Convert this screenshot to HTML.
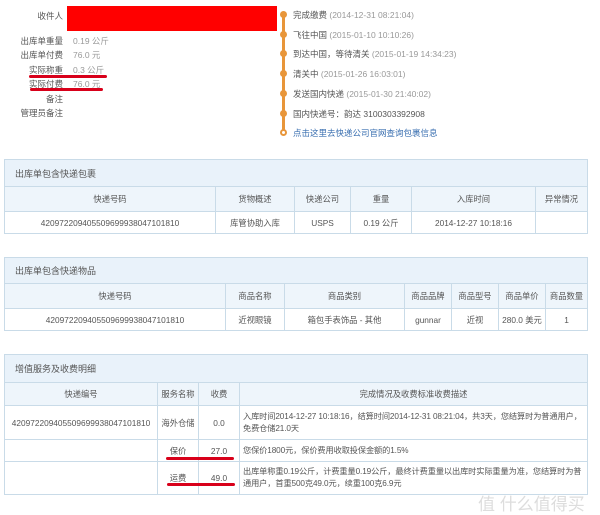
<!DOCTYPE html><html><head><meta charset="utf-8"><style>
*{margin:0;padding:0;box-sizing:border-box}
body{width:600px;height:511px;background:#fff;font-family:"Liberation Sans","Noto Sans CJK SC",sans-serif;font-size:8.5px;color:#555;position:relative;overflow:hidden}
.a{position:absolute;white-space:nowrap}
.lb{position:absolute;right:537px;text-align:right;color:#555}
.v{position:absolute;left:73px;color:#999}
.dot{position:absolute;left:280px;width:7px;height:7px;border-radius:50%;background:#e8963a}
.tl{position:absolute;left:293px;color:#555}
.tl span{color:#999}
table{position:absolute;left:4px;width:584px;border-collapse:collapse;table-layout:fixed}
td{border:1px solid #c9dbe8;text-align:center;color:#555;font-size:8.3px;padding:0 1px;white-space:nowrap;overflow:hidden}
td.w{white-space:normal;text-align:left;line-height:12px;padding:0 3px;font-size:8.2px;letter-spacing:-0.1px}
.t td{background:#e9f2fa;text-align:left;padding-left:10px;font-size:9px}
.h td{background:#eef5fb}
.red{position:absolute;height:3px;background:#d8001a;border-radius:2px}
</style></head><body>
<div class="a" style="left:67px;top:6px;width:210px;height:25px;background:#ff0000"></div>
<div class="lb" style="top:10px">收件人</div>
<div class="lb" style="top:35px">出库单重量</div><div class="v" style="top:35px">0.19 公斤</div>
<div class="lb" style="top:49px">出库单付费</div><div class="v" style="top:49px">76.0 元</div>
<div class="lb" style="top:64px">实际称重</div><div class="v" style="top:64px">0.3 公斤</div>
<div class="lb" style="top:78px">实际付费</div><div class="v" style="top:78px">76.0 元</div>
<div class="lb" style="top:93px">备注</div>
<div class="lb" style="top:107px">管理员备注</div>
<div class="red" style="left:29px;top:75px;width:78px"></div>
<div class="red" style="left:30px;top:88px;width:73px"></div>
<div class="a" style="left:282px;top:14px;width:3px;height:118px;background:#e8963a"></div>
<div class="dot" style="top:11px"></div><div class="dot" style="top:31px"></div><div class="dot" style="top:50px"></div><div class="dot" style="top:70px"></div><div class="dot" style="top:90px"></div><div class="dot" style="top:110px"></div>
<div class="dot" style="top:129px;background:#fff;border:2px solid #e8963a"></div>
<div class="tl" style="top:9px">完成缴费 <span>(2014-12-31 08:21:04)</span></div>
<div class="tl" style="top:29px">飞往中国 <span>(2015-01-10 10:10:26)</span></div>
<div class="tl" style="top:48px">到达中国，等待清关 <span>(2015-01-19 14:34:23)</span></div>
<div class="tl" style="top:68px">清关中 <span>(2015-01-26 16:03:01)</span></div>
<div class="tl" style="top:88px">发送国内快递 <span>(2015-01-30 21:40:02)</span></div>
<div class="tl" style="top:108px">国内快递号：韵达 3100303392908</div>
<div class="tl" style="top:127px;color:#3a6fb0">点击这里去快递公司官网查询包裹信息</div>

<table style="top:159px"><colgroup><col style="width:211px"><col style="width:79px"><col style="width:56px"><col style="width:61px"><col style="width:124px"><col></colgroup>
<tr class="t" style="height:27px"><td colspan="6">出库单包含快递包裹</td></tr>
<tr class="h" style="height:25px"><td>快递号码</td><td>货物概述</td><td>快递公司</td><td>重量</td><td>入库时间</td><td>异常情况</td></tr>
<tr style="height:22px"><td>420972209405509699938047101810</td><td>库管协助入库</td><td>USPS</td><td>0.19 公斤</td><td>2014-12-27 10:18:16</td><td></td></tr></table>

<table style="top:257px"><colgroup><col style="width:221px"><col style="width:59px"><col style="width:120px"><col style="width:47px"><col style="width:47px"><col style="width:47px"><col></colgroup>
<tr class="t" style="height:26px"><td colspan="7">出库单包含快递物品</td></tr>
<tr class="h" style="height:25px"><td>快递号码</td><td>商品名称</td><td>商品类别</td><td>商品品牌</td><td>商品型号</td><td>商品单价</td><td>商品数量</td></tr>
<tr style="height:22px"><td>420972209405509699938047101810</td><td>近视眼镜</td><td>箱包手表饰品 - 其他</td><td>gunnar</td><td>近视</td><td>280.0 美元</td><td>1</td></tr></table>

<table style="top:354px"><colgroup><col style="width:153px"><col style="width:41px"><col style="width:41px"><col></colgroup>
<tr class="t" style="height:28px"><td colspan="4">增值服务及收费明细</td></tr>
<tr class="h" style="height:23px"><td>快递编号</td><td>服务名称</td><td>收费</td><td>完成情况及收费标准收费描述</td></tr>
<tr style="height:34px"><td>420972209405509699938047101810</td><td>海外仓储</td><td>0.0</td><td class="w">入库时间2014-12-27 10:18:16，结算时间2014-12-31 08:21:04，共3天，您结算时为普通用户，免费仓储21.0天</td></tr>
<tr style="height:22px"><td></td><td>保价</td><td>27.0</td><td class="w">您保价1800元，保价费用收取投保金额的1.5%</td></tr>
<tr style="height:33px"><td></td><td>运费</td><td>49.0</td><td class="w">出库单称重0.19公斤，计费重量0.19公斤，最终计费重量以出库时实际重量为准，您结算时为普通用户，首重500克49.0元，续重100克6.9元</td></tr></table>
<div class="red" style="left:166px;top:457px;width:68px"></div>
<div class="red" style="left:167px;top:483px;width:68px"></div>
<div class="a" style="left:478px;top:490px;font-size:17px;color:#ddd">值 什么值得买</div>
</body></html>
